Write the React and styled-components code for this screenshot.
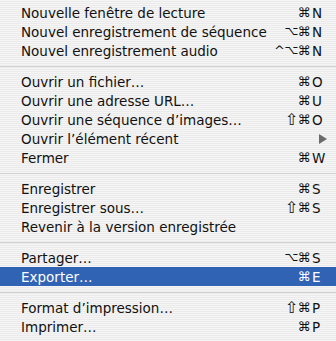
import styled, { createGlobalStyle } from "styled-components";

const GlobalStyle = createGlobalStyle`
  html, body {
    margin: 0;
    padding: 0;
    background: #efefef;
  }
`;

const Menu = styled.div`
  width: 336px;
  height: 341px;
  box-sizing: border-box;
  padding: 3px 0 5px;
  background: repeating-linear-gradient(
    to bottom,
    #f5f5f5 0px,
    #f5f5f5 1px,
    #ebebeb 1px,
    #ebebeb 2px
  );
  font-family: "DejaVu Sans", "Liberation Sans", sans-serif;
  font-size: 13.5px;
  color: #111;
  overflow: hidden;
`;

const Item = styled.div`
  height: 19px;
  display: flex;
  align-items: center;
  padding: 0 9px 0 21px;
  background: ${(props) => (props.$selected ? "#3163b5" : "transparent")};
  color: ${(props) => (props.$selected ? "#fff" : "#111")};
  white-space: nowrap;
`;

const Label = styled.span`
  flex: 1;
`;

const Mods = styled.span`
  display: flex;
  align-items: center;
`;

const Glyph = styled.span`
  width: ${(props) => props.$width || 12}px;
  display: flex;
  justify-content: center;
  overflow: visible;
  font-size: ${(props) => props.$size || 13.5}px;
  line-height: 19px;
`;

const Key = styled.span`
  width: 15px;
  display: flex;
  justify-content: ${(props) => (props.$end ? "flex-end" : "flex-start")};
  padding-left: 2px;
`;

const Separator = styled.div`
  height: 12px;
  display: flex;
  align-items: center;

  &::after {
    content: "";
    flex: 1;
    height: 1px;
    background: #d2d2d2;
  }
`;

const Arrow = () => (
  <svg width="8" height="10" viewBox="0 0 8 10">
    <path d="M0 0 L8 5 L0 10 Z" fill="#6b6b6b" />
  </svg>
);

const glyphStyle = {
  "^": { $width: 11, $size: 13 },
  "⌥": { $width: 13, $size: 12 },
  "⇧": { $width: 13, $size: 16 },
  "⌘": { $width: 12, $size: 13 },
};

const items = [
  { label: "Nouvelle fenêtre de lecture", mods: "⌘", key: "N" },
  { label: "Nouvel enregistrement de séquence", mods: "⌥⌘", key: "N" },
  { label: "Nouvel enregistrement audio", mods: "^⌥⌘", key: "N" },
  { sep: true },
  { label: "Ouvrir un fichier…", mods: "⌘", key: "O" },
  { label: "Ouvrir une adresse URL…", mods: "⌘", key: "U" },
  { label: "Ouvrir une séquence d’images…", mods: "⇧⌘", key: "O" },
  { label: "Ouvrir l’élément récent", submenu: true },
  { label: "Fermer", mods: "⌘", key: "W" },
  { sep: true },
  { label: "Enregistrer", mods: "⌘", key: "S" },
  { label: "Enregistrer sous…", mods: "⇧⌘", key: "S" },
  { label: "Revenir à la version enregistrée" },
  { sep: true },
  { label: "Partager…", mods: "⌥⌘", key: "S" },
  { label: "Exporter…", mods: "⌘", key: "E", selected: true },
  { sep: true },
  { label: "Format d’impression…", mods: "⇧⌘", key: "P" },
  { label: "Imprimer…", mods: "⌘", key: "P" },
];

const App = () => (
  <>
    <GlobalStyle />
    <Menu>
      {items.map((item, i) =>
        item.sep ? (
          <Separator key={i} />
        ) : (
          <Item key={i} $selected={item.selected}>
            <Label>{item.label}</Label>
            {item.mods && (
              <Mods>
                {[...item.mods].map((g, j) => (
                  <Glyph key={j} {...glyphStyle[g]}>
                    {g}
                  </Glyph>
                ))}
              </Mods>
            )}
            {item.submenu ? (
              <Key $end>
                <Arrow />
              </Key>
            ) : (
              item.key && <Key>{item.key}</Key>
            )}
          </Item>
        )
      )}
    </Menu>
  </>
);

export default App;
